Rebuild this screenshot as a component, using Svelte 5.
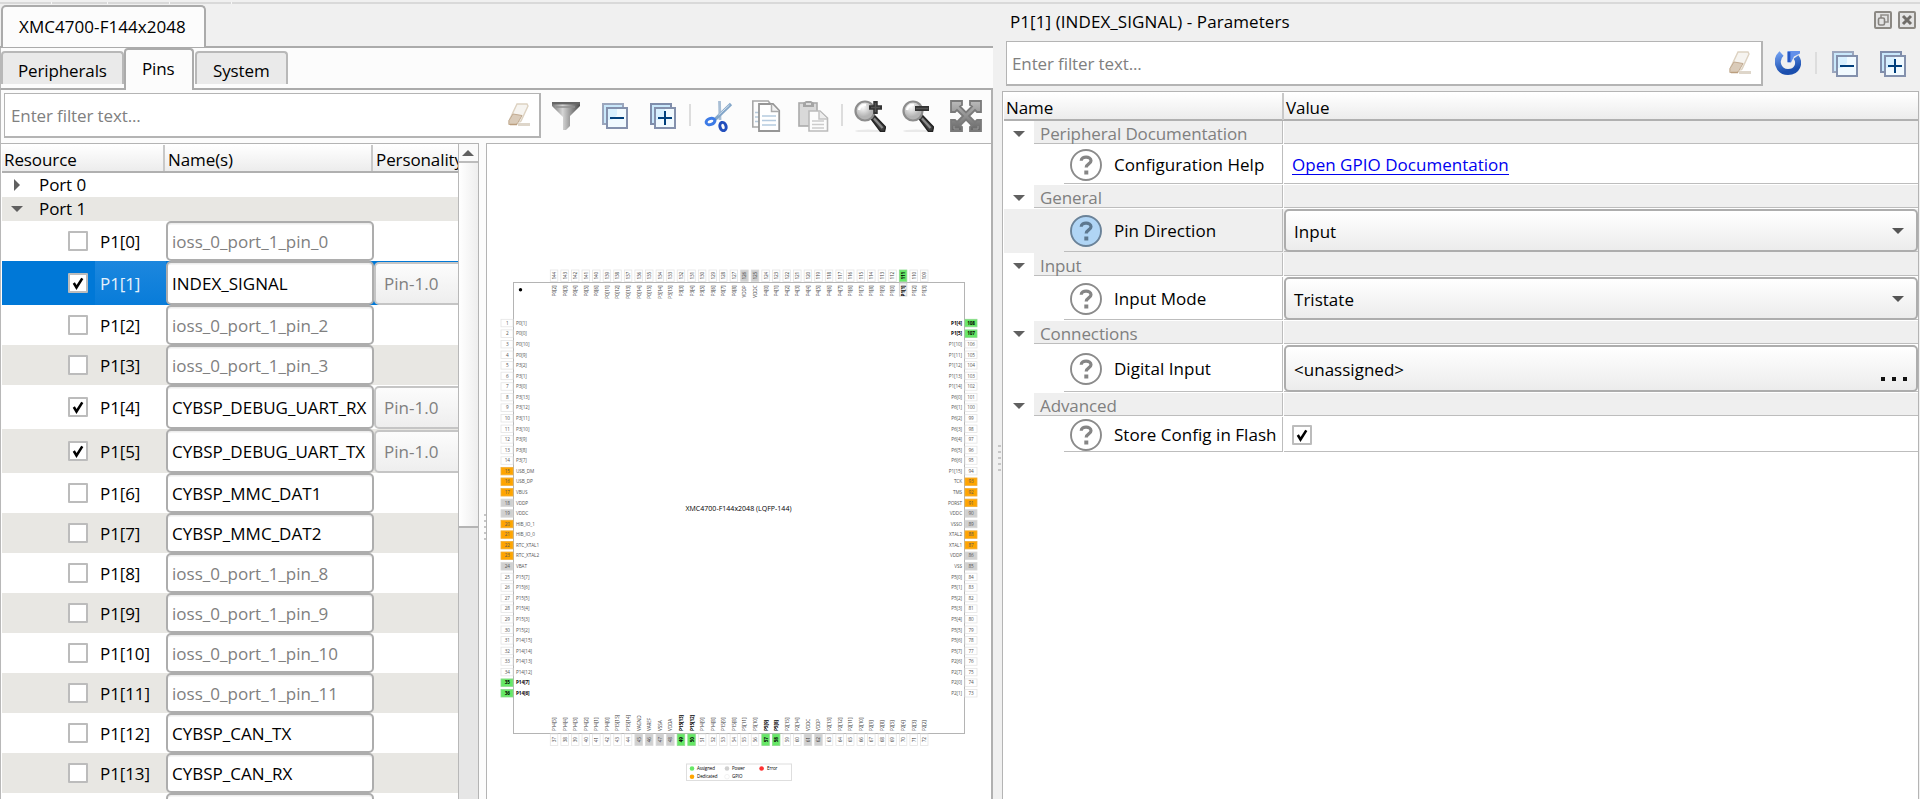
<script>
  const pins = [
    { label: 'P1[0]', name: 'ioss_0_port_1_pin_0', on: false, dim: true },
    { label: 'P1[1]', name: 'INDEX_SIGNAL', on: true, selected: true },
    { label: 'P1[2]', name: 'ioss_0_port_1_pin_2', dim: true },
    { label: 'P1[3]', name: 'ioss_0_port_1_pin_3', dim: true },
    { label: 'P1[4]', name: 'CYBSP_DEBUG_UART_RX', on: true },
    { label: 'P1[5]', name: 'CYBSP_DEBUG_UART_TX', on: true },
    { label: 'P1[6]', name: 'CYBSP_MMC_DAT1' },
    { label: 'P1[7]', name: 'CYBSP_MMC_DAT2' },
    { label: 'P1[8]', name: 'ioss_0_port_1_pin_8', dim: true },
    { label: 'P1[9]', name: 'ioss_0_port_1_pin_9', dim: true },
    { label: 'P1[10]', name: 'ioss_0_port_1_pin_10', dim: true },
    { label: 'P1[11]', name: 'ioss_0_port_1_pin_11', dim: true },
    { label: 'P1[12]', name: 'CYBSP_CAN_TX' },
    { label: 'P1[13]', name: 'CYBSP_CAN_RX' },
    { label: '', name: '' }
  ];

  const params = [
    { title: 'Peripheral Documentation', label: 'Configuration Help', kind: 'link', value: 'Open GPIO Documentation', h: 40 },
    { title: 'General', label: 'Pin Direction', kind: 'combo', value: 'Input', h: 44, active: true },
    { title: 'Input', label: 'Input Mode', kind: 'combo', value: 'Tristate', h: 44 },
    { title: 'Connections', label: 'Digital Input', kind: 'browse', value: '<unassigned>', h: 48 },
    { title: 'Advanced', label: 'Store Config in Flash', kind: 'check', value: '', h: 36 }
  ];

  // Pin names in package order, counter-clockwise from pin 1.
  const left = 'P0[1] P0[0] P0[10] P0[9] P3[2] P3[1] P3[0] P3[13] P3[12] P3[11] P3[10] P3[9] P3[8] P3[7] USB_DM USB_DP VBUS VDDP VDDC HIB_IO_1 HIB_IO_0 RTC_XTAL1 RTC_XTAL2 VBAT P15[7] P15[6] P15[5] P15[4] P15[3] P15[2] P14[15] P14[14] P14[13] P14[12] P14[7] P14[6]'.split(' ');
  const bottom = 'P14[5] P14[4] P14[3] P14[2] P14[1] P14[0] P15[15] P15[14] VAGND VAREF VSSA VDDA P15[13] P15[12] P14[9] P14[8] P15[9] P15[8] P5[11] P5[10] P5[9] P5[8] P2[15] P2[14] VDDC VDDP P2[13] P2[12] P2[11] P2[10] P2[9] P2[8] P2[5] P2[4] P2[3] P2[2]'.split(' ');
  const right = 'P1[4] P1[5] P1[10] P1[11] P1[12] P1[13] P1[14] P6[0] P6[1] P6[2] P6[3] P6[4] P6[5] P6[6] P1[15] TCK TMS PORST VDDC VSSO XTAL2 XTAL1 VDDP VSS P5[0] P5[1] P5[2] P5[3] P5[4] P5[5] P5[6] P5[7] P2[6] P2[7] P2[0] P2[1]'.split(' ');
  const top = 'P0[2] P0[3] P0[4] P0[5] P0[6] P0[11] P0[12] P0[13] P0[14] P0[15] P3[14] P3[15] P3[3] P3[4] P3[5] P3[6] P0[7] P0[8] VDDP VDDC P4[0] P4[1] P4[2] P4[3] P4[4] P4[5] P4[6] P4[7] P1[6] P1[7] P1[8] P1[9] P1[0] P1[1] P1[2] P1[3]'.split(' ');

  const assigned = new Set([35, 36, 49, 50, 57, 58, 107, 108, 111]);
  const power = new Set([18, 19, 24, 45, 46, 47, 48, 61, 62, 85, 86, 89, 90, 125, 126]);
  const dedicated = new Set([15, 16, 17, 20, 21, 22, 23, 87, 88, 91, 92, 93]);
  const kindOf = (n) => assigned.has(n) ? 'assigned' : power.has(n) ? 'power' : dedicated.has(n) ? 'dedicated' : 'gpio';
  const step = 10.577;
</script>

{#snippet eraser()}
  <svg class="eraser" width="24" height="26" viewBox="0 0 24 26">
    <path d="M10 2h10l1 2-7 15-4 3H2v-3z" fill="#f6f4f0" stroke="#ddd2c1" stroke-width="1.4" />
    <path d="M6 12l9 1.500-4 7-2 2H2v-4z" fill="#dacbb9" stroke="#c2ab91" stroke-width="1" />
    <path d="M3 22.500h7" stroke="#bb9e7e" stroke-width="1.500" />
    <path d="M11 20.500h2v1" fill="#fff" />
    <path d="M11 22.500h12" stroke="#ded6ca" stroke-width="3" />
  </svg>
{/snippet}

{#snippet treeIcon(plus)}
  <svg width="32" height="32" viewBox="0 0 32 32">
    <rect x="5" y="4" width="20" height="20" fill="#c9e8fb" stroke={plus ? '#7f8dab' : '#9ba6bd'} stroke-width="2" />
    <rect x="9" y="8" width="20" height="20" fill="#f1faff" stroke="#8491ad" stroke-width="2" />
    <path d="M10 9h9v6l-5 5h-4z" fill="#d8f0ff" />
    <path d="M12 18h14" stroke="#003f7c" stroke-width="2" />
    {#if plus}<path d="M19 11v14" stroke="#003f7c" stroke-width="2" />{/if}
  </svg>
{/snippet}

{#snippet magnifier(plus)}
  <svg width="32" height="32" viewBox="0 0 32 32">
    <ellipse cx="14" cy="31" rx="13" ry="1.500" fill="#e9e9e9" />
    <path d="M16.500 18l3.500-3 11.500 12-1 4.500h-4z" fill="#3d3d3d" stroke="#222" stroke-width="1.400" />
    <path d="M20 18.500l8.500 9.500" stroke="#8a8a8a" stroke-width="2.200" />
    <circle cx="11" cy="11" r="9.500" fill="url(#lens)" stroke="#8d8d8d" stroke-width="2.200" />
    <path d="M5 10a6 6 0 0 1 7-5" fill="none" stroke="#fff" stroke-width="2.500" />
    {#if plus}
      <path d="M15 7.500h13M21.500 1v13" stroke="#333" stroke-width="4.500" />
      <path d="M17 7.500h9M21.500 3v9" stroke="#555" stroke-width="1.500" />
    {:else}
      <path d="M13 8.500h14" stroke="#333" stroke-width="5" />
      <path d="M14 8.500h12" stroke="#555" stroke-width="1.500" />
    {/if}
  </svg>
{/snippet}

{#snippet checkbox(on)}
  <span class="check">
    {#if on}<svg width="16" height="16" viewBox="0 0 16 16"><path d="M3.800 8l2.700 4.500L12.300 3.300" fill="none" stroke="#000" stroke-width="2.500" /></svg>{/if}
  </span>
{/snippet}

<main>
  <div class="strip"><i></i><i></i><i></i><i></i></div>
  <div class="body">
    <section class="device">
      <div class="device-tabs"><div class="device-tab">XMC4700-F144x2048</div></div>
      <div class="tabs">
        <div class="tab t1">Peripherals</div>
        <div class="tab t2 current">Pins</div>
        <div class="tab t3">System</div>
      </div>
      <div class="pane">
        <div class="toolbar">
          <div class="filter"><span>Enter filter text...</span>{@render eraser()}</div>
          <svg class="first" width="32" height="32" viewBox="0 0 32 32">
            <defs>
              <linearGradient id="metal"><stop offset="0" stop-color="#777" /><stop offset=".38" stop-color="#d5d5d5" /><stop offset="1" stop-color="#4c4c4c" /></linearGradient>
              <radialGradient id="lens" cx=".4" cy=".3"><stop offset="0" stop-color="#fafafa" /><stop offset="1" stop-color="#b4b4b4" /></radialGradient>
              <linearGradient id="fit" x2="0" y2="1"><stop offset="0" stop-color="#bbb" /><stop offset="1" stop-color="#666" /></linearGradient>
            </defs>
            <path d="M2 2h28v4l-10 10v10l-4 4h-3V17L2 6z" fill="url(#metal)" />
            <path d="M2 3.200h28" stroke="#666" stroke-width="2.400" />
            <path d="M6 7h19" stroke="#8f8f8f" stroke-width="1.500" />
          </svg>
          {@render treeIcon(false)}
          {@render treeIcon(true)}
          <i class="sep"></i>
          <svg width="32" height="32" viewBox="0 0 32 32">
            <path d="M17.500 1l.5 19" stroke="#a8bed5" stroke-width="2.800" />
            <path d="M29 4L12.500 20" stroke="#83a6c9" stroke-width="3.200" />
            <path d="M27.500 5L16.500 15" stroke="#d7e3ee" stroke-width="1" />
            <ellipse cx="8.500" cy="21.500" rx="4.500" ry="3" transform="rotate(-18 8.500 21.500)" fill="none" stroke="#3d7be6" stroke-width="3" />
            <ellipse cx="21" cy="26.500" rx="3" ry="4.200" transform="rotate(-18 21 26.500)" fill="none" stroke="#234fbd" stroke-width="3" />
          </svg>
          <svg width="32" height="32" viewBox="0 0 32 32">
            <path d="M2.800 1h15.400l4 5v21H2.800z" fill="#fdfdfd" stroke="#a8a8a8" stroke-width="1.600" />
            <path d="M5 12.500h5M5 17h5M5 21.500h5" stroke="#b8cbdc" stroke-width="1.600" />
            <path d="M9 4h14l6.200 6.500V31H9z" fill="#fff" stroke="#969696" stroke-width="1.800" />
            <path d="M21.500 4v7.500H29" fill="#f1f1f1" stroke="#aaa" stroke-width="1.500" />
            <path d="M12 16h14M12 20.500h14M12 25h14" stroke="#b5cbe0" stroke-width="1.600" />
          </svg>
          <svg width="32" height="32" viewBox="0 0 32 32">
            <rect x="1" y="3" width="18" height="23" fill="#d9d9d9" stroke="#aaa" stroke-width="1.600" />
            <path d="M5 7V3l3-2h5l3 2v4z" fill="#a5a5a5" /><path d="M8 4h5" stroke="#ddd" stroke-width="2" />
            <path d="M11 11h11l7.500 7v13H11z" fill="#fcfcfc" stroke="#bababa" stroke-width="1.600" />
            <path d="M21 11v8h8" fill="#eee" stroke="#c4c4c4" stroke-width="1.500" />
            <path d="M14 21h12M14 24.500h12M14 28h12" stroke="#ccc" stroke-width="1.500" />
          </svg>
          <i class="sep second"></i>
          {@render magnifier(true)}
          {@render magnifier(false)}
          <svg width="32" height="32" viewBox="0 0 32 32">
            <path d="M1 1h11v4l-2 1.500 6 6 6-6L20 5V1h11v11h-4l-2-2-6 6 6 6 2-2h4v11H20v-4l2-1.500-6-6-6 6 2 1.500v4H1V20h4l2 2 6-6-6-6-2 2H1z" fill="url(#fit)" stroke="#7a7a7a" stroke-width="1.800" />
            <path d="M4 26v3h5M23 29h5v-3" fill="none" stroke="#999" />
          </svg>
        </div>

        <div class="content">
          <div class="tree">
            <div class="rows">
              <div class="thead"><span>Resource</span><span>Name(s)</span><span>Personality</span></div>
              <div class="port"><svg width="12" height="12"><path d="M3 0l6 6-6 6z" fill="#606060" /></svg>Port 0</div>
              <div class="port alt"><svg width="12" height="12"><path d="M0 3h12L6 9z" fill="#606060" /></svg>Port 1</div>
              {#each pins as pin, i}
                <div class="row" class:alt={i % 2 === 1} class:tall={pin.on} class:selected={pin.selected}>
                  {@render checkbox(pin.on)}
                  <span class="label">{pin.label}</span>
                  <span class="name" class:dim={pin.dim}>{pin.name}</span>
                  {#if pin.on}<span class="pers">Pin-1.0</span>{/if}
                </div>
              {/each}
            </div>
            <div class="scroll">
              <div class="up"><svg width="12" height="6"><path d="M0 6h12L6 0z" fill="#606060" /></svg></div>
              <div class="thumb"></div>
            </div>
          </div>
          <div class="grip"><i></i><i></i><i></i><i></i><i></i></div>

          <div class="canvas">
            <svg class="package" width="505" height="655" viewBox="487 144 505 655">
              <rect x="513.500" y="282.500" width="451" height="451" fill="#fff" stroke="#b4b4b4" />
              <circle cx="520.500" cy="289.700" r="1.700" />
              {#each left as name, i}
                {@const n = i + 1}{@const y = 322.800 + i * step}
                <g class={kindOf(n)}>
                  <rect x="501" y={y - 3.500} width="12" height="7.500" />
                  <text class="num" x="507.300" y={y + 2}>{n}</text>
                  <text x="516" y={y + 2}>{name}</text>
                </g>
              {/each}
              {#each right as name, i}
                {@const n = 108 - i}{@const y = 322.800 + i * step}
                <g class={kindOf(n)}>
                  <rect x="965" y={y - 3.500} width="12" height="7.500" />
                  <text class="num" x="971" y={y + 2}>{n}</text>
                  <text class="end" x="962" y={y + 2}>{name}</text>
                </g>
              {/each}
              {#each top as name, i}
                {@const n = 144 - i}{@const x = 554 + i * step}
                <g class={kindOf(n)}>
                  <rect x={x - 3.700} y="270" width="7.500" height="11.500" />
                  {#if n === 111}<rect class="focus" x={x - 3.700} y="283" width="7.500" height="13" />{/if}
                  <text class="num v" transform="translate({x + 2} 275.700) rotate(-90)">{n}</text>
                  <text class="end v" transform="translate({x + 2} 285.500) rotate(-90)">{name}</text>
                </g>
              {/each}
              {#each bottom as name, i}
                {@const n = 37 + i}{@const x = 554 + i * step}
                <g class={kindOf(n)}>
                  <rect x={x - 3.700} y="734" width="7.500" height="11.500" />
                  <text class="num v" transform="translate({x + 2} 739.700) rotate(-90)">{n}</text>
                  <text class="v" transform="translate({x + 2} 731) rotate(-90)">{name}</text>
                </g>
              {/each}
              <text class="chip" x="685.500" y="511" textLength="106">XMC4700-F144x2048 (LQFP-144)</text>
              <g class="legend">
                <rect x="686.500" y="764" width="105" height="16.500" />
                <circle cx="692" cy="768.500" r="2.300" fill="#66e866" /><text x="697" y="770.300">Assigned</text>
                <circle cx="692" cy="776.700" r="2.300" fill="#ffa500" /><text x="697" y="778.300">Dedicated</text>
                <circle cx="727" cy="768.500" r="2.300" fill="#d0d0d0" /><text x="732" y="770.300">Power</text>
                <circle cx="727" cy="776.700" r="2.300" fill="#fff" stroke="#e4e4e4" stroke-width=".5" /><text x="732" y="778.300">GPIO</text>
                <circle cx="761.600" cy="768.500" r="2.300" fill="#ff3030" /><text x="767" y="770.300">Error</text>
              </g>
            </svg>
          </div>
        </div>
      </div>
    </section>

    <div class="splitter"><i></i><i></i><i></i><i></i><i></i></div>

    <section class="dock">
      <div class="title">
        <span>P1[1] (INDEX_SIGNAL) - Parameters</span>
        <svg width="18" height="18" viewBox="0 0 18 18"><rect x="1" y="1" width="16" height="16" rx="1" fill="#e4e4e4" stroke="#8c8984" stroke-width="2" /><path d="M7 7V4h7v7h-3" fill="none" stroke="#918e8a" stroke-width="1.600" /><rect x="4.500" y="7" width="6" height="7" rx="1.500" fill="none" stroke="#86837f" stroke-width="1.600" /></svg>
        <svg width="18" height="18" viewBox="0 0 18 18"><rect x="1" y="1" width="16" height="16" rx="1" fill="#e4e4e4" stroke="#8c8984" stroke-width="2" /><path d="M5 5l8 8M13 5l-8 8" stroke="#706d69" stroke-width="3" /></svg>
      </div>
      <div class="dock-tools">
        <div class="filter"><span>Enter filter text...</span>{@render eraser()}</div>
        <svg class="reload" width="26" height="26" viewBox="0 0 26 26">
          <defs><linearGradient id="blue" x2=".3" y2="1"><stop offset="0" stop-color="#6d9cee" /><stop offset="1" stop-color="#1b4fae" /></linearGradient></defs>
          <path d="M6.500 3.500C-.5 10 3 22 13 22c9.500 0 12.500-9 8-15" fill="none" stroke="url(#blue)" stroke-width="6" />
          <path d="M12.500 1H25v2.500l-6 3-3 6h-3.500z" fill="#6390ea" /><path d="M14 2v10" stroke="#2759c4" stroke-width="2.800" />
        </svg>
        <i class="sep"></i>
        {@render treeIcon(false)}
        {@render treeIcon(true)}
      </div>
      <div class="grid">
        <div class="ghead"><span>Name</span><span>Value</span></div>
        {#each params as p}
          <div class="group">
            <div class="arrow"><svg width="12" height="6"><path d="M0 0h12L6 6z" fill="#606060" /></svg></div>
            <div class="gname">{p.title}</div>
            <div class="gval"></div>
          </div>
          <div class="param" class:active={p.active} style:height="{p.h}px">
            <div class="pname">
              <svg width="32" height="32" viewBox="0 0 32 32">
                <circle cx="16" cy="16" r="15" fill={p.active ? '#b0d5f5' : '#fff'} stroke={p.active ? '#6a8298' : '#8b8b8b'} stroke-width="1.900" />
                <path d="M11.200 11.700c.2-5 9.800-4.500 9.800 0 0 3.300-4.800 3-4.800 6.800" fill="none" stroke={p.active ? '#5d788f' : '#858585'} stroke-width="3.200" />
                <path d="M14.300 21.500h4v4h-4z" fill={p.active ? '#5d788f' : '#858585'} />
              </svg>
              <span>{p.label}</span>
            </div>
            <div class="pval">
              {#if p.kind === 'link'}<span class="link">{p.value}</span>
              {:else if p.kind === 'check'}{@render checkbox(true)}
              {:else}
                <div class="combo">
                  <span>{p.value}</span>
                  {#if p.kind === 'combo'}<svg width="12" height="6"><path d="M0 0h12L6 6z" fill="#555" /></svg>
                  {:else}<svg class="dots" width="26" height="4"><path d="M0 0h4v4H0zM11 0h4v4h-4zM22 0h4v4h-4z" fill="#111" /></svg>{/if}
                </div>
              {/if}
            </div>
          </div>
        {/each}
      </div>
    </section>
  </div>
</main>

<style>
  :global(body) { overflow: hidden; }
  * { box-sizing: border-box; }
  svg { display: block; flex: none; }
  main { width: 1920px; height: 799px; overflow: hidden; background: #f0f0f0; font: 17px/24px "Open Sans", "Noto Sans", sans-serif; letter-spacing: .02px; color: #000; white-space: nowrap; display: flex; flex-direction: column; }
  .strip { height: 5px; flex: none; display: flex; padding: 2px 0 1px 51px; background: linear-gradient(#f0f0f0 2px, #d9d9d9 2px 4px, #f0f0f0 4px); }
  .strip i { width: 1px; height: 2px; background: #f7f7f7; margin-right: 55px; }
  .strip i:nth-child(2), .strip i:nth-child(3) { margin-right: 61px; }
  .body { flex: 1; display: flex; min-height: 0; }
  .device { width: 993px; flex: none; display: flex; flex-direction: column; }
  .device-tabs { height: 43px; flex: none; border-bottom: 2px solid #ababab; }
  .device-tab { width: 205px; height: 42px; margin-left: 1px; background: #fcfcfc; border: 2px solid #ababab; border-bottom: 0; border-radius: 5px 5px 0 0; padding: 8px 0 0 16px; letter-spacing: .06px; }
  .tabs { height: 42px; flex: none; display: flex; align-items: flex-start; background: #fcfcfc; border-left: 1px solid #b8b8b8; border-bottom: 2px solid #ababab; }
  .tab { background: #eaeaea; border: 2px solid #b8b8b8; border-bottom: 0; border-radius: 4px 4px 0 0; height: 33px; margin-top: 3px; padding: 6px 0 0 15px; letter-spacing: -.12px; }
  .t1 { width: 123px; }
  .t2 { width: 70px; }
  .t3 { width: 93px; margin-left: 1px; padding-left: 16px; }
  .tab.current { background: #fcfcfc; height: 42px; margin: 0; border-color: #ababab; padding: 7px 0 0 16px; }
  .pane { flex: 1; min-height: 0; background: #fcfcfc; border-left: 1px solid #b8b8b8; border-right: 2px solid #b0b0b0; display: flex; flex-direction: column; }
  .toolbar { height: 53px; flex: none; display: flex; align-items: center; gap: 16px; padding: 0 0 3px 3px; }
  .toolbar > svg { margin-top: 1px; }
  .filter { width: 537px; height: 45px; background: #fff; border: 1px solid #b4b4b4; border-right-width: 2px; border-bottom-width: 2px; display: flex; align-items: center; justify-content: space-between; padding: 0 8px 0 6px; color: #808080; flex: none; letter-spacing: -.12px; }
  .filter span { padding-top: 2px; }
  .toolbar .first { margin-left: -7px; }
  .sep { width: 2px; height: 22px; background: #ddd; flex: none; margin: 0 -5px; }
  .content { flex: 1; min-height: 0; display: flex; }
  .tree { width: 478px; flex: none; display: flex; border: 1px solid #b4b4b4; border-left: 0; border-bottom: 0; padding-left: 1px; background: #fff; overflow: hidden; }
  .rows { width: 456px; flex: none; overflow: hidden; background: #fff; }
  .thead { height: 28px; margin: 1px 0 0; display: grid; grid-template-columns: 163px 208px 85px; background: linear-gradient(#fff, #ececec); border-bottom: 2px solid #b0b0b0; letter-spacing: -.1px; }
  .thead span { padding: 3px 0 0 3px; border-right: 2px solid #c8c8c8; overflow: hidden; }
  .thead span:nth-child(1) { padding-left: 2px; }
  .thead span:nth-child(3) { border: 0; padding-left: 3px; }
  .port { height: 24px; display: flex; align-items: center; gap: 16px; padding-left: 9px; letter-spacing: -.1px; }
  .alt { background: #e8e7e3; }
  .row { height: 40px; display: flex; align-items: center; padding-left: 66px; }
  .row.tall { height: 44px; }
  .check { width: 20px; height: 20px; border: 2px solid #bcbcbc; border-radius: 1px; background: #fff; flex: none; display: block; }
  .label { width: 71px; height: 100%; padding-left: 5px; margin-left: 7px; display: flex; align-items: center; padding-top: 1px; flex: none; letter-spacing: -.1px; }
  .selected { background: #0078d7; color: #e6f1fb; }
  .selected .label { background: linear-gradient(#1d87de, #087cd9); }
  .name { width: 208px; height: 100%; flex: none; border: 2px solid #adadad; border-radius: 5px; background: #fff; color: #000; box-shadow: inset 0 1.500px #ededed; display: flex; align-items: center; padding: 1px 0 0 4px; }
  .dim { color: #808080; }
  .pers { width: 100px; height: calc(100% - 1px); flex: none; border: 2px solid #c5c5c5; border-radius: 5px; background: linear-gradient(#fcfcfc, #eee); color: #808080; display: flex; align-items: center; padding: 1px 0 0 8px; margin-left: 0; }
  .scroll { flex: 1; border-left: 1px solid #b8b8b8; background: #e6e6e6; }
  .up { height: 19px; background: #fafafa; border-bottom: 2px solid #bcbcbc; display: flex; justify-content: center; padding: 6px 1px 0 0; }
  .thumb { height: 365px; background: linear-gradient(90deg, #fff, #eee); border-bottom: 2px solid #b4b4b4; }
  .grip { width: 7px; flex: none; padding: 371px 0 0 5px; }
  .grip i, .splitter i { display: block; width: 3px; height: 2px; margin-bottom: 4px; background: #c6c6c6; }
  .canvas { flex: 1; border: 1px solid #b4b4b4; border-width: 1px 0 0 1px; background: #fff; overflow: hidden; }
  .package { font-size: 4.700px; letter-spacing: -.1px; }
  .package text { fill: #555; }
  .package .v { fill: #3c3c3c; }
  .package .num { text-anchor: middle; }
  .package .end { text-anchor: end; }
  .package g rect { fill: #fff; stroke: #e4e4e4; stroke-width: .8; }
  .package .assigned rect { fill: #66e866; stroke: #8bd98b; }
  .package .assigned text { fill: #000; font-weight: 700; }
  .package .assigned .focus { fill: #f4f4f4; stroke: #ccc; }
  .package .power rect { fill: #d0d0d0; stroke: #d8d8d8; }
  .package .dedicated rect { fill: #ffa500; stroke: #f0ae3a; }
  .package .chip { fill: #000; font-size: 7px; letter-spacing: 0; }
  .package .legend text { fill: #000; font-size: 4.500px; }
  .package .legend rect { stroke: #dedede; stroke-width: 1; }
  .splitter { width: 9px; flex: none; padding: 440px 0 0 5px; }
  .dock { flex: 1; display: flex; flex-direction: column; min-width: 0; }
  .title { height: 36px; flex: none; display: flex; align-items: flex-start; gap: 6px; padding: 5px 4px 0 8px; }
  .title span { flex: 1; letter-spacing: .08px; }
  .title svg { margin-top: 1px; }
  .dock-tools { height: 50px; flex: none; display: flex; padding-left: 4px; align-items: flex-start; }
  .dock-tools .filter { width: 757px; padding-right: 9px; padding-left: 5px; }
  .reload { margin: 9px 0 0 12px; }
  .dock-tools .sep { margin: 11px 11px 0 14px; }
  .dock-tools > svg:not(.reload) { margin: 7px 16px 0 0; }
  .grid { flex: 1; margin-right: 1px; border: 1px solid #b4b4b4; border-bottom: 0; background: #fff; padding: 1px 0 0 1px; }
  .ghead { height: 28px; display: grid; grid-template-columns: 280px 1fr; background: linear-gradient(#fff, #ececec); border-bottom: 2px solid #b0b0b0; letter-spacing: -.1px; }
  .ghead span { padding: 3px 0 0 2px; }
  .ghead span:first-child { border-right: 2px solid #c8c8c8; }
  .group { height: 24px; display: flex; }
  .arrow { width: 30px; padding: 10px 0 0 9px; }
  .gname { width: 249px; height: 23px; line-height: 25px; background: #efefef; border-bottom: 1px solid #bdbdbd; border-right: 1px solid #bdbdbd; color: #808080; padding-left: 6px; letter-spacing: -.1px; }
  .gval { flex: 1; height: 23px; margin-left: 1px; background: #efefef; border-bottom: 1px solid #bdbdbd; }
  .param { display: flex; }
  .active { background: #efefef; }
  .pname { width: 219px; margin-left: 60px; height: calc(100% - 1px); border-right: 1px solid #bdbdbd; border-bottom: 1px solid #bdbdbd; display: flex; align-items: center; padding: 2px 0 0 6px; gap: 12px; letter-spacing: .04px; }
  .pval { flex: 1; margin-left: 1px; height: calc(100% - 1px); border-bottom: 1px solid #bdbdbd; display: flex; align-items: center; }
  .pval > .check, .link { margin: 2px 0 0 8px; }
  .link { color: #0000f0; border-bottom: 1px solid #0000f0; line-height: 19px; }
  .combo { flex: 1; align-self: stretch; margin: 0 0 -1px; border: 2px solid #adadad; border-radius: 5px; background: linear-gradient(#fff, #ececec); display: flex; align-items: center; justify-content: space-between; padding: 0 12px 0 8px; }
  .combo span { padding-top: 2px; }
  .dots { align-self: flex-end; margin: 0 -3px 9px; }
</style>
